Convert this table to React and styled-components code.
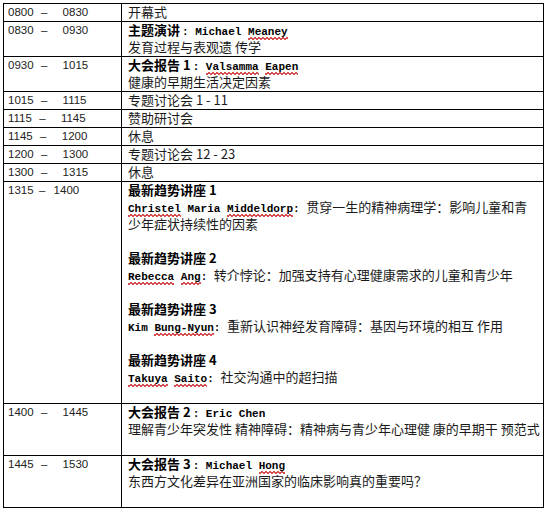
import React from 'react'
import styled, { createGlobalStyle } from 'styled-components'

const GlobalStyle = createGlobalStyle`
    body {
        margin: 0;
        background: #ffffff;
        font-family: "Liberation Sans", "Noto Sans CJK SC", sans-serif;
        color: #111111;
    }
`

const Table = styled.table`
    margin: 3px;
    width: 541px;
    border-collapse: collapse;
    border: 1px solid #000;
    table-layout: fixed;
`

const Row = styled.tr``

const TimeCell = styled.td`
    width: 113px;
    border: 1px solid #000;
    padding: 0 0 0 4px;
    vertical-align: top;
    font-family: "Liberation Sans", sans-serif;
    font-size: 11.5px;
    color: #222;
`

const ContentCell = styled.td`
    border: 1px solid #000;
    padding: 0 0 0 6px;
    vertical-align: top;
    font-family: "Noto Sans CJK SC", sans-serif;
    font-size: 13px;
    color: #1a1a1a;
`

const Line = styled.div`
    height: 17px;
    line-height: 16px;
    white-space: nowrap;
`

const Heading = styled.span`
    font-weight: 700;
    color: #000;
`

const Name = styled.span`
    font-family: "Liberation Mono", monospace;
    font-weight: 700;
    font-size: 11px;
    color: #000;
    margin-left: ${(p) => (p.$lead ? 2 : 0)}px;
`

const Misspelt = styled.span`
    position: relative;
    &::after {
        content: '';
        position: absolute;
        left: 0;
        right: 0;
        bottom: -2px;
        height: 3px;
        background:
            linear-gradient(135deg, transparent 40%, #d03030 40%, #d03030 60%, transparent 60%) 0 0 / 4px 3px repeat-x,
            linear-gradient(45deg, transparent 40%, #d03030 40%, #d03030 60%, transparent 60%) 2px 0 / 4px 3px repeat-x;
        opacity: 0.85;
    }
`

const Dash = styled.span`
    display: inline-block;
    width: 7px;
    margin: 0 ${(p) => (p.$wide ? 15 : 8)}px 0 ${(p) => (p.$wide ? 7 : 5)}px;
    text-align: center;
`

const Time = ({ from, to, wide = true }) => (
    <TimeCell>
        <Line>
            {from}
            <Dash $wide={wide}>–</Dash>
            {to}
        </Line>
    </TimeCell>
)

const Speaker = ({ words, lead, colon }) => (
    <Name $lead={lead}>
        {lead && ': '}
        {words.map((w, i) => (
            <React.Fragment key={i}>
                {i > 0 && ' '}
                {w.bad ? <Misspelt>{w.t}</Misspelt> : w.t}
            </React.Fragment>
        ))}
        {colon && ': '}
    </Name>
)

const Blank = () => <Line />

export default function App() {
    return (
        <>
            <GlobalStyle />
            <Table>
                <tbody>
                    <Row>
                        <Time from="0800" to="0830" />
                        <ContentCell><Line>开幕式</Line></ContentCell>
                    </Row>
                    <Row>
                        <Time from="0830" to="0930" />
                        <ContentCell>
                            <Line>
                                <Heading>主题演讲</Heading>
                                <Speaker lead words={[{ t: 'Michael' }, { t: 'Meaney', bad: true }]} />
                            </Line>
                            <Line>发育过程与表观遗 传学</Line>
                        </ContentCell>
                    </Row>
                    <Row>
                        <Time from="0930" to="1015" />
                        <ContentCell>
                            <Line>
                                <Heading>大会报告 1</Heading>
                                <Speaker lead words={[{ t: 'Valsamma', bad: true }, { t: 'Eapen', bad: true }]} />
                            </Line>
                            <Line>健康的早期生活决定因素</Line>
                        </ContentCell>
                    </Row>
                    <Row>
                        <Time from="1015" to="1115" />
                        <ContentCell><Line>专题讨论会 1 - 11</Line></ContentCell>
                    </Row>
                    <Row>
                        <Time from="1115" to="1145" />
                        <ContentCell><Line>赞助研讨会</Line></ContentCell>
                    </Row>
                    <Row>
                        <Time from="1145" to="1200" />
                        <ContentCell><Line>休息</Line></ContentCell>
                    </Row>
                    <Row>
                        <Time from="1200" to="1300" />
                        <ContentCell><Line>专题讨论会 12 - 23</Line></ContentCell>
                    </Row>
                    <Row>
                        <Time from="1300" to="1315" />
                        <ContentCell><Line>休息</Line></ContentCell>
                    </Row>
                    <Row>
                        <Time from="1315" to="1400" wide={false} />
                        <ContentCell>
                            <Line><Heading>最新趋势讲座 1</Heading></Line>
                            <Line>
                                <Speaker colon words={[{ t: 'Christel', bad: true }, { t: 'Maria' }, { t: 'Middeldorp', bad: true }]} />
                                贯穿一生的精神病理学：影响儿童和青
                            </Line>
                            <Line>少年症状持续性的因素</Line>
                            <Blank />
                            <Line><Heading>最新趋势讲座 2</Heading></Line>
                            <Line>
                                <Speaker colon words={[{ t: 'Rebecca', bad: true }, { t: 'Ang', bad: true }]} />
                                转介悖论：加强支持有心理健康需求的儿童和青少年
                            </Line>
                            <Blank />
                            <Line><Heading>最新趋势讲座 3</Heading></Line>
                            <Line>
                                <Speaker colon words={[{ t: 'Kim' }, { t: 'Bung-Nyun', bad: true }]} />
                                重新认识神经发育障碍：基因与环境的相互 作用
                            </Line>
                            <Blank />
                            <Line><Heading>最新趋势讲座 4</Heading></Line>
                            <Line>
                                <Speaker colon words={[{ t: 'Takuya', bad: true }, { t: 'Saito', bad: true }]} />
                                社交沟通中的超扫描
                            </Line>
                            <Blank />
                        </ContentCell>
                    </Row>
                    <Row>
                        <Time from="1400" to="1445" />
                        <ContentCell>
                            <Line>
                                <Heading>大会报告 2</Heading>
                                <Speaker lead words={[{ t: 'Eric' }, { t: 'Chen' }]} />
                            </Line>
                            <Line>理解青少年突发性 精神障碍：精神病与青少年心理健 康的早期干 预范式</Line>
                            <Blank />
                        </ContentCell>
                    </Row>
                    <Row>
                        <Time from="1445" to="1530" />
                        <ContentCell>
                            <Line>
                                <Heading>大会报告 3</Heading>
                                <Speaker lead words={[{ t: 'Michael' }, { t: 'Hong', bad: true }]} />
                            </Line>
                            <Line>东西方文化差异在亚洲国家的临床影响真的重要吗？</Line>
                            <Blank />
                        </ContentCell>
                    </Row>
                </tbody>
            </Table>
        </>
    )
}
